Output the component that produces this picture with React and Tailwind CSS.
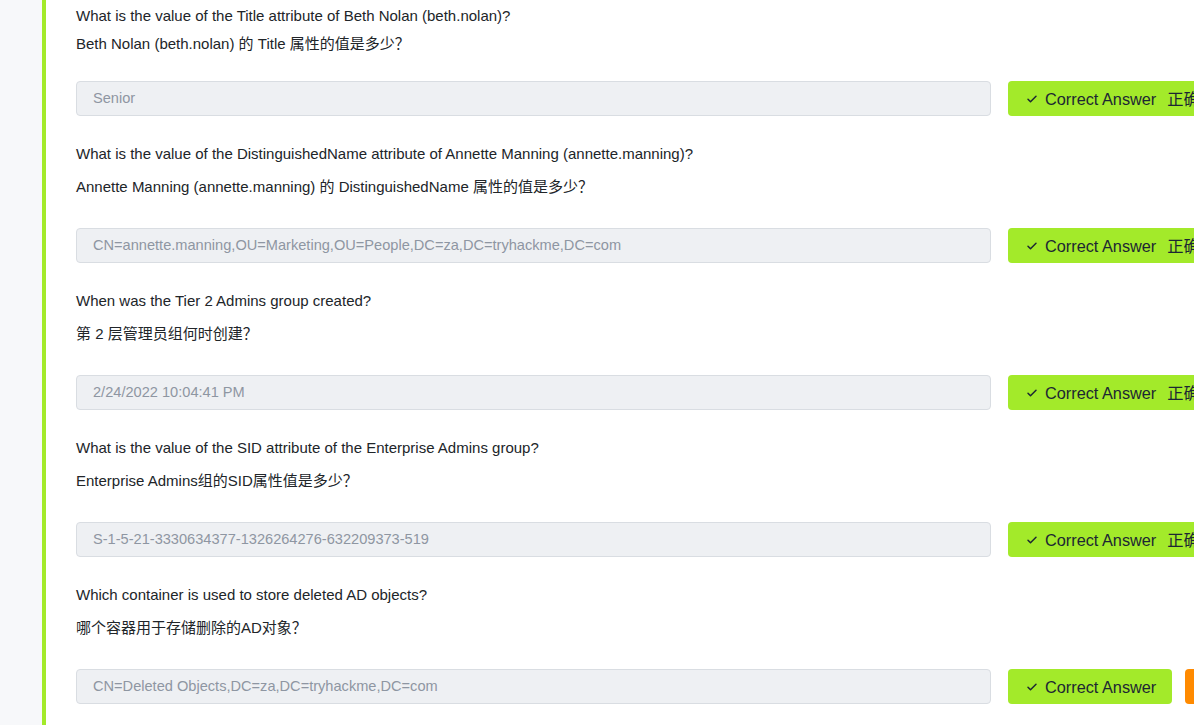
import React from "react";

const questions = [
  {
    en: "What is the value of the Title attribute of Beth Nolan (beth.nolan)?",
    zh: "Beth Nolan (beth.nolan) 的 Title 属性的值是多少？",
    answer: "Senior",
    tight: true,
  },
  {
    en: "What is the value of the DistinguishedName attribute of Annette Manning (annette.manning)?",
    zh: "Annette Manning (annette.manning) 的 DistinguishedName 属性的值是多少？",
    answer: "CN=annette.manning,OU=Marketing,OU=People,DC=za,DC=tryhackme,DC=com",
  },
  {
    en: "When was the Tier 2 Admins group created?",
    zh: "第 2 层管理员组何时创建？",
    answer: "2/24/2022 10:04:41 PM",
  },
  {
    en: "What is the value of the SID attribute of the Enterprise Admins group?",
    zh: "Enterprise Admins组的SID属性值是多少？",
    answer: "S-1-5-21-3330634377-1326264276-632209373-519",
  },
  {
    en: "Which container is used to store deleted AD objects?",
    zh: "哪个容器用于存储删除的AD对象？",
    answer: "CN=Deleted Objects,DC=za,DC=tryhackme,DC=com",
    last: true,
  },
];

const Check = () => (
  <svg width="12" height="12" viewBox="0 0 24 24" fill="none" stroke="currentColor" strokeWidth="3" strokeLinecap="round" strokeLinejoin="round">
    <path d="M4 12.5l5 5L20 6.5" />
  </svg>
);

const QuestionBlock = ({ q }) => (
  <div className={q.tight ? "pt-[6px]" : "pt-[28px]"}>
    <p className="text-[15px] leading-[20px] text-[#212529]">{q.en}</p>
    <p className={`text-[15px] leading-[20px] text-[#212529] ${q.tight ? "mt-[8px]" : "mt-[13px]"}`}>{q.zh}</p>
    <div className={`flex items-center gap-[17px] ${q.tight ? "mt-[27px]" : "mt-[31px]"}`}>
      <div className="w-[915px] shrink-0 h-[35px] flex items-center px-[16px] pt-[1px] rounded-[4px] border border-[#d9dde2] bg-[#eef0f3] text-[14.6px] text-[#8e96a2]">
        {q.answer}
      </div>
      <button className="shrink-0 h-[35px] flex items-center gap-[7px] pl-[18px] pr-[16px] pt-[1px] rounded-[4px] bg-[#a3ea2a] text-[#1c2733] text-[16.3px] whitespace-nowrap">
        <Check />
        <span>Correct Answer</span>
        {!q.last && <span className="ml-[4px]">正确答案</span>}
      </button>
      {q.last && <div className="shrink-0 w-[40px] h-[35px] -ml-[4px] rounded-[4px] bg-[#ff8a00]" />}
    </div>
  </div>
);

export default function App() {
  return (
    <div
      className="w-[1194px] h-[725px] overflow-hidden flex bg-white"
      style={{ fontFamily: '"Liberation Sans", "Noto Sans CJK SC", sans-serif' }}
    >
      <div className="w-[42px] shrink-0 bg-[#f7f8fa]" />
      <div className="w-[4px] shrink-0 bg-[#a3ea2a]" />
      <div className="flex-1 pl-[30px] overflow-hidden">
        {questions.map((q, i) => (
          <QuestionBlock key={i} q={q} />
        ))}
      </div>
    </div>
  );
}
